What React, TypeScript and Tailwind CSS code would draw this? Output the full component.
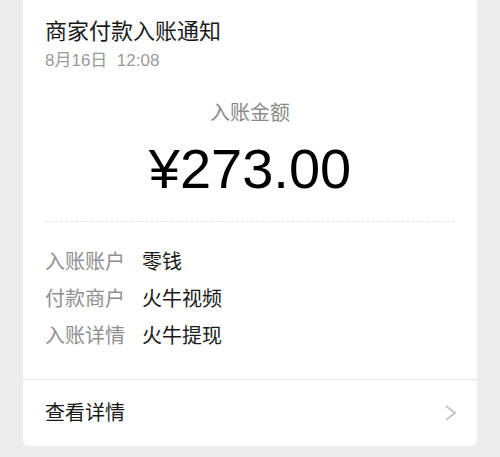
export default function App() {
  const cjk = { fontFamily: '"Liberation Sans", "Noto Sans CJK SC", sans-serif' };
  const rows = [
    ["入账账户", "零钱"],
    ["付款商户", "火牛视频"],
    ["入账详情", "火牛提现"],
  ];
  return (
    <div className="w-[500px] h-[457px] bg-[#ededed] overflow-hidden" style={cjk}>
      <div className="mx-[23px] bg-white rounded-b-[6px] flex flex-col">
        <div className="px-[22px] flex flex-col">
          <div className="mt-[17px] text-[22px] leading-[30px] text-[#1a1a1a]">商家付款入账通知</div>
          <div className="mt-[2px] text-[17px] leading-[24px] text-[#9a9a9a]">8月16日&nbsp;&nbsp;12:08</div>
          <div className="mt-[26px] text-[20px] leading-[28px] text-[#8a8a8a] text-center">入账金额</div>
          <div className="mt-[10px] text-[56px] leading-[64px] text-black text-center">¥273.00</div>
          <div className="mt-[20px] border-t border-dashed border-[#e3e3e3]" />
          <div className="mt-[22px] mb-[24px] flex flex-col">
            {rows.map(([l, v]) => (
              <div key={l} className="flex text-[20px] leading-[37px]">
                <span className="text-[#8f8f8f]">{l}</span>
                <span className="ml-[17px] text-[#1a1a1a]">{v}</span>
              </div>
            ))}
          </div>
        </div>
        <div className="border-t border-[#e6e6e6] h-[67px] pl-[22px] pr-[19px] flex items-center justify-between">
          <span className="text-[20px] text-[#1a1a1a]">查看详情</span>
          <svg width="14" height="16" viewBox="0 0 14 16">
            <path d="M2 1 L11 8 L2 15" fill="none" stroke="#c4c4c4" strokeWidth="2" />
          </svg>
        </div>
      </div>
    </div>
  );
}
